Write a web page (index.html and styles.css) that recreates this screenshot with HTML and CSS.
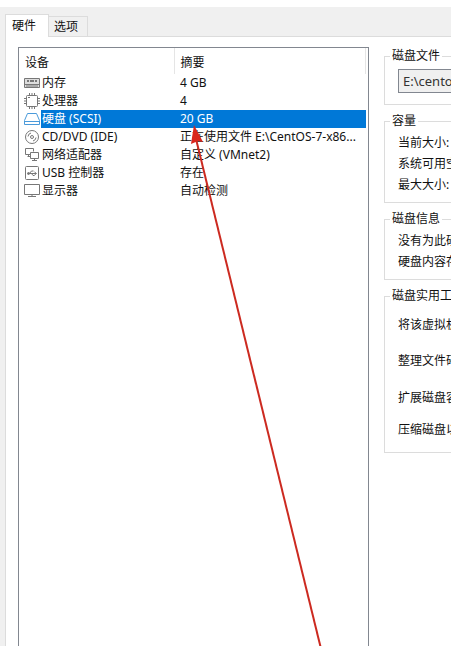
FILE: index.html
```html
<!DOCTYPE html>
<html lang="zh-CN">
<head>
  <meta charset="UTF-8">
  <meta name="viewport" content="width=device-width, initial-scale=1.0">
  <title>虚拟机设置</title>
  <link rel="stylesheet" href="styles.css">
</head>
<body>
<div class="tabs">
  <button class="tab active" type="button">硬件</button>
  <button class="tab" type="button">选项</button>
</div>
<div class="page">
  <div class="devices">
    <table>
      <thead>
        <tr><th class="name">设备</th><th>摘要</th></tr>
      </thead>
      <tbody>
        <tr>
          <td><div class="device"><svg width="16" height="16" viewBox="0 0 16 16"><path d="M.5 3.500h15v9H.5z" fill="#ddd"/><path d="M3 5.500h2m1 0h4m1 0h2M3 6.500h2m1 0h4m1 0h2M1 9.500h14M3 12v-2m2 2v-2m2 2v-2m2 2v-2m2 2v-2m2 2v-2"/></svg><span>内存</span></div></td>
          <td>4 GB</td>
        </tr>
        <tr>
          <td><div class="device"><svg width="16" height="16" viewBox="0 0 16 16"><rect x="2.500" y="2.500" width="11" height="11" rx="1"/><path d="M5.500 2V0m2.500 2V0m2.500 2V0M5.500 14v2m2.500-2v2m2.500-2v2M2 5.500H0m2 2.500H0m2 2.500H0M14 5.500h2m-2 2.500h2m-2 2.500h2M4 4.500h2"/></svg><span>处理器</span></div></td>
          <td>4</td>
        </tr>
        <tr class="selected">
          <td><div class="device"><svg class="blue" width="16" height="16" viewBox="0 0 16 16"><path d="M3.500 2.500h9l3 7v4H.5v-4zM.5 10.500h15"/></svg><span>硬盘 (SCSI)</span></div></td>
          <td>20 GB</td>
        </tr>
        <tr>
          <td><div class="device"><svg width="16" height="16" viewBox="0 0 16 16"><circle cx="8" cy="8" r="6.500"/><circle cx="8" cy="8" r="1.500"/><path d="M4 7.500A4 4 0 0 1 7 4M12 8.500A4 4 0 0 1 9 12"/></svg><span>CD/DVD (IDE)</span></div></td>
          <td>正在使用文件 E:\CentOS-7-x86...</td>
        </tr>
        <tr>
          <td><div class="device"><svg width="16" height="16" viewBox="0 0 16 16"><path d="M6 7.500H1.500v-6h8v3M3.500 9.500H6M4.500 7.500v2M6.500 5.500h8v6h-8zM10.500 11.500v2M8 13.500h5"/></svg><span>网络适配器</span></div></td>
          <td>自定义 (VMnet2)</td>
        </tr>
        <tr>
          <td><div class="device"><svg width="16" height="16" viewBox="0 0 16 16"><rect x="1.500" y="1.500" width="13" height="13" rx="1"/><path d="M4 8.500h8M5.500 8.500L7.500 6h2M7.500 8.500l1.500 2h1.500M10.500 7l2 1.500-2 1.500"/><circle cx="4.500" cy="8.500" r="1" fill="#777"/></svg><span>USB 控制器</span></div></td>
          <td>存在</td>
        </tr>
        <tr>
          <td><div class="device"><svg width="16" height="16" viewBox="0 0 16 16"><path d="M.5 1.500h15v10H.5zM8 11.500v2M4 13.500h8"/></svg><span>显示器</span></div></td>
          <td>自动检测</td>
        </tr>
      </tbody>
    </table>
  </div>
  <div class="details">
    <fieldset>
      <legend>磁盘文件</legend>
      <input class="path" type="text" value="E:\centos" aria-label="磁盘文件" readonly>
    </fieldset>
    <fieldset>
      <legend>容量</legend>
      <p>当前大小:</p>
      <p>系统可用空</p>
      <p>最大大小:</p>
    </fieldset>
    <fieldset>
      <legend>磁盘信息</legend>
      <p>没有为此硬</p>
      <p>硬盘内容存</p>
    </fieldset>
    <fieldset>
      <legend>磁盘实用工</legend>
      <div class="tools">
        <p>将该虚拟机</p>
        <p>整理文件碎</p>
        <p>扩展磁盘容</p>
        <p>压缩磁盘以</p>
      </div>
    </fieldset>
  </div>
</div>
<svg class="arrow" width="140" height="540" viewBox="0 0 140 540">
  <path d="M9 14l128 522" stroke="#cc2a20" stroke-width="2"/>
  <path d="M7 0l9 17-5-1-7 3z" fill="#d9261c"/>
</svg>
</body>
</html>
```
FILE: styles.css
```css
* { margin: 0; padding: 0; box-sizing: border-box; }
body {
  display: flex;
  flex-direction: column;
  height: 100vh;
  overflow: hidden;
  border-top: 7px solid #fff;
  background: #f0f0f0;
  color: #111;
  font: 12px/18px "Noto Sans", "Noto Sans CJK SC", sans-serif;
}

/* tabs */
.tabs {
  display: flex;
  align-items: flex-end;
  height: 29px;
  padding-left: 5px;
  flex-shrink: 0;
}
.tab {
  height: 20px;
  padding: 0 9px 0 5px;
  border: 1px solid #dcdcdc;
  border-left: none;
  border-bottom: none;
  background: #f0f0f0;
  color: inherit;
  font: inherit;
}
.tab.active {
  height: 23px;
  margin-bottom: -1px;
  padding: 0 12px 0 6px;
  border-left: 1px solid #dcdcdc;
  background: #fff;
  position: relative;
}

.page {
  display: flex;
  gap: 15px;
  flex: 1;
  min-height: 0;
  margin-left: 5px;
  padding: 10px 0 0 12px;
  border: 1px solid #dcdcdc;
  border-width: 1px 0 0 1px;
  background: #fff;
}

/* device list */
.devices {
  flex: 0 0 351px;
  padding-right: 2px;
  border: 1px solid #828790;
  border-bottom: none;
}
table {
  width: 100%;
  table-layout: fixed;
  border-collapse: collapse;
}
th {
  height: 26px;
  padding: 3px 0 0 6px;
  border-right: 1px solid #e5e5e5;
  font-weight: normal;
  text-align: left;
}
th.name { width: 155px; }
td {
  height: 18px;
  padding-left: 6px;
  white-space: nowrap;
}
td:first-child { padding-left: 5px; }
.device { display: flex; align-items: center; }
.device span { flex: 1; padding-left: 1px; }
.device svg {
  margin-right: 1px;
  fill: none;
  stroke: #777;
}
.device svg.blue { stroke: #4a9ada; }
.selected td { color: #fff; background: #0078d7; }
.selected td:first-child { background: none; }
.selected span { background: #0078d7; }

/* disk details */
.details {
  display: flex;
  flex-direction: column;
  gap: 8px;
  flex: 1;
  min-width: 0;
  padding-top: 1px;
  overflow: hidden;
}
fieldset {
  min-width: 0;
  padding: 3px 0 7px 13px;
  border: 1px solid #dcdcdc;
  border-right: none;
  white-space: nowrap;
}
legend {
  margin-left: -8px;
  padding: 0 2px;
  line-height: 16px;
}
fieldset p { line-height: 21px; }
.path {
  display: block;
  width: 200px;
  height: 24px;
  margin: 2px 0 4px;
  padding: 0 4px;
  border: 1px solid #828790;
  background: #f0f0f0;
  color: #333;
  font: inherit;
  font-size: 13px;
}
.tools {
  display: grid;
  grid-template-rows: 34px 38px 36px 28px;
  align-items: center;
  padding-bottom: 2px;
}

.arrow {
  position: absolute;
  left: 187px;
  top: 125px;
  fill: none;
}
```
